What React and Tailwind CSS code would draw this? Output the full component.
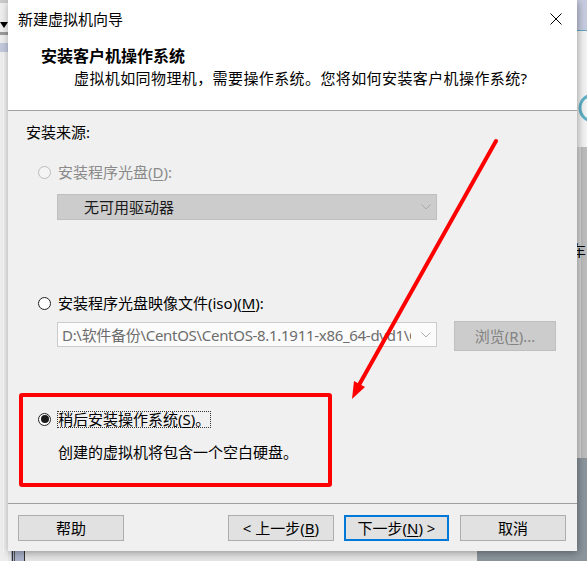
import React from "react";

function Radio({ checked = false, disabled = false }) {
  return (
    <span
      className={
        disabled
          ? "w-[13px] h-[13px] rounded-full border border-[#bcbcbc] bg-[#f4f4f4] flex items-center justify-center shrink-0"
          : "w-[13px] h-[13px] rounded-full border border-[#222222] bg-white flex items-center justify-center shrink-0"
      }
    >
      {checked && <span className="w-[8px] h-[8px] rounded-full bg-[#1a1a1a]" />}
    </span>
  );
}

function Chevron({ color = "#a8a8a8" }) {
  return (
    <svg width="10" height="6" viewBox="0 0 10 6" className="shrink-0">
      <polyline points="0.5,0.5 5,5 9.5,0.5" fill="none" stroke={color} strokeWidth="1" />
    </svg>
  );
}

function Btn({ children, primary = false }) {
  return (
    <div
      className={
        primary
          ? "w-[105px] h-[26px] bg-[#e1e1e1] border-2 border-[#0078d7] flex items-center justify-center leading-none text-black"
          : "w-[106px] h-[26px] bg-[#e1e1e1] border border-[#adadad] flex items-center justify-center leading-none text-black"
      }
    >
      {children}
    </div>
  );
}

export default function App() {
  return (
    <div className="relative w-[587px] h-[561px] overflow-hidden bg-[#e6e6e6] font-['Noto_Sans','Noto_Sans_CJK_SC',sans-serif] text-[15px] text-black">
      {/* background desktop: left strip */}
      <div className="absolute left-0 top-0 w-[8px] h-[561px] bg-[#eeeeee]">
        <div className="h-[3px] bg-[#c9c9c9]" />
        <div className="absolute left-0 top-[22px] w-0 h-0 border-l-[4px] border-r-[4px] border-t-[6px] border-l-transparent border-r-transparent border-t-black" />
        <div className="absolute left-0 top-[32px] w-[8px] h-[3px] bg-[#9a9a9a]" />
        <div className="absolute left-0 top-[43px] w-[8px] h-[9px] bg-[#c3c9dc]" />
        <div className="absolute left-[3px] top-[52px] w-[1px] h-[500px] bg-[#f8f8f8]" />
      </div>
      {/* background: right strip */}
      <div className="absolute left-[577px] top-0 w-[10px] h-[561px] bg-[#bdbdbd]">
        <div className="absolute left-0 top-0 w-[10px] h-[30px] bg-[#c7cce0]" />
        <div className="absolute left-0 top-[30px] w-[10px] h-[1px] bg-[#6aa6c6]" />
        <div className="absolute left-0 top-[31px] w-[10px] h-[116px] bg-[#f3f3f3] overflow-hidden">
          <svg width="10" height="116" viewBox="0 0 10 116">
            <circle cx="16" cy="77" r="13" fill="none" stroke="#5fb2c8" strokeWidth="3" />
          </svg>
        </div>
        <div className="absolute left-0 top-[147px] w-[4px] h-[311px] bg-[#d6d6d6]" />
        <div className="absolute left-0 top-[458px] w-[10px] h-[103px] bg-[#8b959c]" />
      </div>
      <div className="absolute left-[571px] top-[240px] leading-[20px]">车</div>
      {/* background: bottom strip */}
      <div className="absolute left-[477px] top-[551px] w-[110px] h-[10px] bg-[#8b959c]" />
      <div className="absolute left-[11px] top-[551px] w-[14px] h-[10px] bg-[#aab4cc]">
        <div className="absolute left-[1px] top-0 w-[1px] h-[10px] bg-[#333]" />
        <div className="absolute left-[3px] top-0 w-[1px] h-[10px] bg-[#555]" />
        <div className="absolute left-[13px] top-0 w-[1px] h-[10px] bg-[#333]" />
      </div>

      {/* dialog window */}
      <div className="absolute left-[8px] top-0 w-[569px] h-[551px] bg-[#f0f0f0] flex flex-col shadow-[1px_2px_8px_rgba(0,0,0,0.35)]">
        {/* header */}
        <div className="h-[111px] bg-white border-b border-[#a0a0a0] flex flex-col shrink-0">
          <div className="h-[38px] flex items-center justify-between pl-[10px] pr-[15px]">
            <span className="leading-[20px]">新建虚拟机向导</span>
            <svg width="12" height="12" viewBox="0 0 12 12">
              <line x1="0.5" y1="0.5" x2="11.5" y2="11.5" stroke="#000" strokeWidth="1" />
              <line x1="11.5" y1="0.5" x2="0.5" y2="11.5" stroke="#000" strokeWidth="1" />
            </svg>
          </div>
          <div className="mt-[7px] pl-[33px] leading-[22px] font-bold text-[16px]">安装客户机操作系统</div>
          <div className="pl-[66px] leading-[22px] tracking-[0.4px]">虚拟机如同物理机，需要操作系统。您将如何安装客户机操作系统?</div>
        </div>

        {/* body */}
        <div className="flex-1 flex flex-col">
          <div className="mt-[11px] pl-[18px] leading-[20px]">安装来源:</div>

          <div className="mt-[20px] h-[20px] pl-[30px] flex items-center gap-[7px]">
            <Radio disabled />
            <span className="leading-[20px] text-[#8a8a8a]">
              安装程序光盘(<span className="underline underline-offset-2">D</span>):
            </span>
          </div>

          <div className="mt-[12px] ml-[49px] w-[380px] h-[26px] bg-[#cccccc] border border-[#bfbfbf] flex items-center justify-between pl-[26px] pr-[5px]">
            <span className="leading-[20px] text-[#1a1a1a]">无可用驱动器</span>
            <Chevron color="#a9a9a9" />
          </div>

          <div className="mt-[73px] h-[20px] pl-[30px] flex items-center gap-[7px]">
            <Radio />
            <span className="leading-[20px]">
              安装程序光盘映像文件(iso)(<span className="underline underline-offset-2">M</span>):
            </span>
          </div>

          <div className="mt-[8px] flex items-start">
            <div className="mt-[1px] ml-[49px] w-[380px] h-[25px] bg-[#fbfbfb] border border-[#cccccc] flex items-center pl-[4px] pr-[5px]">
              <div className="flex-1 overflow-hidden whitespace-nowrap leading-[20px] text-[#6d6d6d] mr-[10px] tracking-[-0.3px]">
                D:\软件备份\CentOS\CentOS-8.1.1911-x86_64-dvd1\CentOS-8.1.1911-x86_64-dvd1.iso
              </div>
              <Chevron color="#b0b0b0" />
            </div>
            <div className="ml-[17px] w-[102px] h-[30px] bg-[#cccccc] border border-[#bfbfbf] flex items-center justify-center leading-none text-[#838383]">
              浏览(<span className="underline underline-offset-2">R</span>)...
            </div>
          </div>

          <div className="mt-[42px] ml-[11px] w-[313px] h-[94px] border-4 border-[#ff0000] rounded-[3px] flex flex-col">
            <div className="mt-[12px] h-[20px] pl-[15px] flex items-center gap-[6px]">
              <Radio checked />
              <span className="leading-[15px] border border-dotted border-[#333]">
                稍后安装操作系统(<span className="underline underline-offset-2">S</span>)。
              </span>
            </div>
            <div className="mt-[13px] pl-[35px] leading-[20px]">创建的虚拟机将包含一个空白硬盘。</div>
          </div>
        </div>

        {/* footer */}
        <div className="h-[48px] shrink-0 border-t border-[#a0a0a0] flex items-start pt-[11px] pl-[10px] pr-[11px]">
          <Btn>帮助</Btn>
          <div className="flex-1" />
          <Btn>
            &lt; 上一步(<span className="underline underline-offset-2">B</span>)
          </Btn>
          <div className="w-[10px]" />
          <Btn primary>
            下一步(<span className="underline underline-offset-2">N</span>) &gt;
          </Btn>
          <div className="w-[11px]" />
          <Btn>取消</Btn>
        </div>
      </div>

      {/* red annotation arrow */}
      <svg className="absolute left-0 top-0 pointer-events-none" width="587" height="561" viewBox="0 0 587 561">
        <line x1="496" y1="141" x2="359" y2="385" stroke="#ff0000" strokeWidth="4" strokeLinecap="round" />
        <polygon points="352,399 365,387 354,381" fill="#ff0000" />
      </svg>
    </div>
  );
}
